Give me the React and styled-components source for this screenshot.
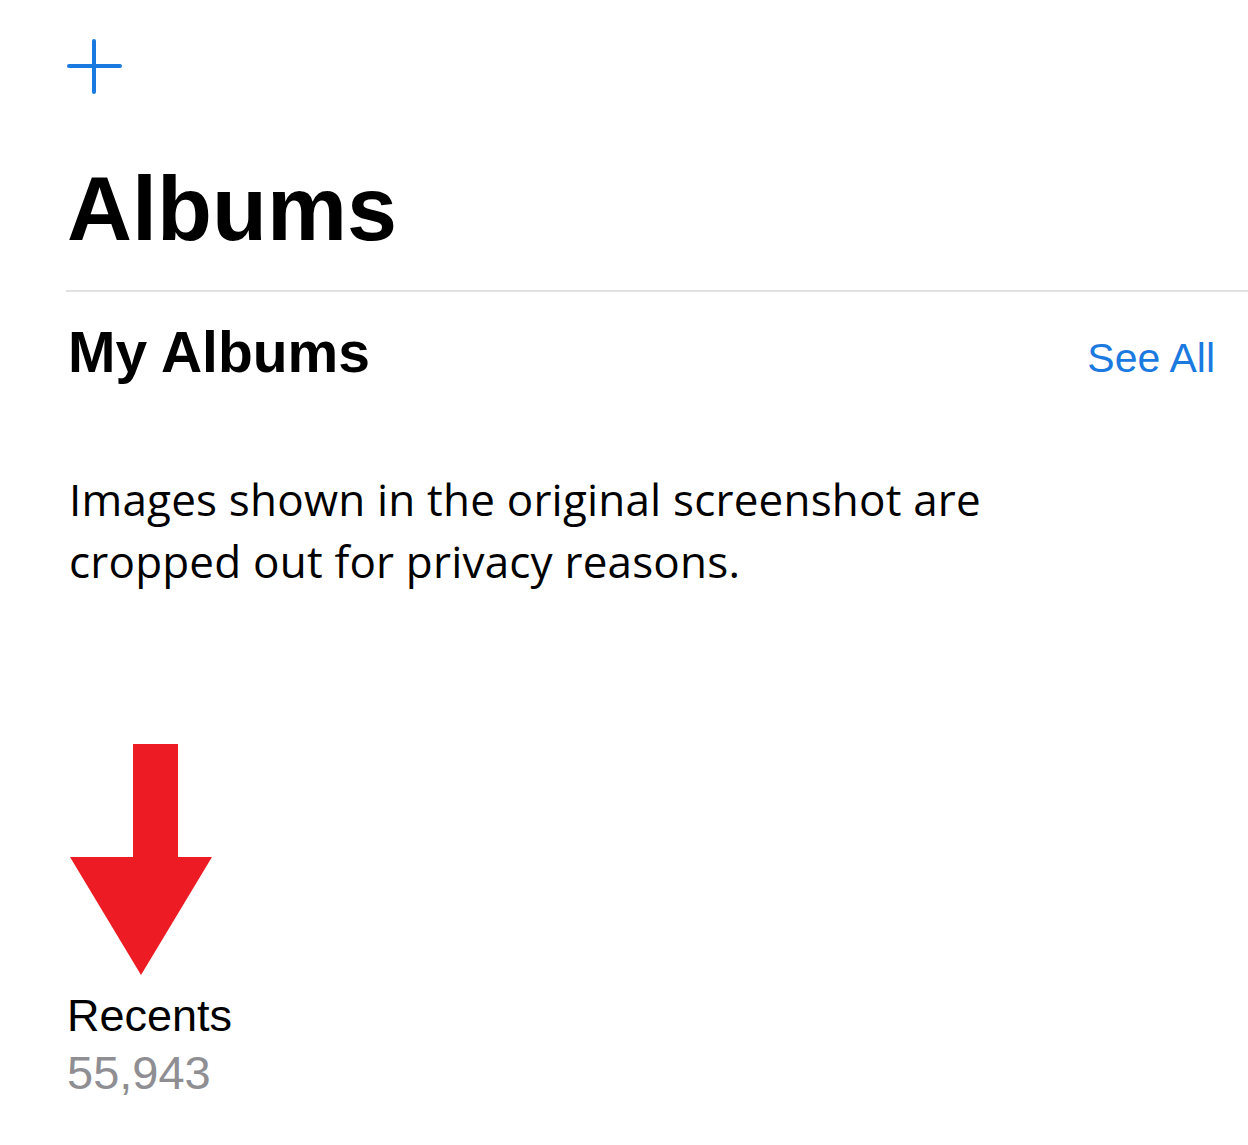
import React from "react";
import styled, { createGlobalStyle } from "styled-components";

const GlobalStyle = createGlobalStyle`
  html, body {
    margin: 0;
    padding: 0;
    background: #ffffff;
  }
  body {
    font-family: "Liberation Sans", Arial, sans-serif;
    color: #000;
  }
`;

const Page = styled.div`
  width: 1248px;
  height: 1145px;
  box-sizing: border-box;
  padding: 38px 0 0 66px;
  overflow: hidden;
`;

const AddButton = styled.button`
  display: block;
  width: 56px;
  height: 56px;
  padding: 0;
  border: 0;
  background: none;
  cursor: pointer;
`;

const Title = styled.h1`
  margin: 70px 0 0 1px;
  font-size: 90px;
  line-height: 1;
  font-weight: 700;
`;

const Divider = styled.hr`
  margin: 36px 0 0;
  border: 0;
  height: 2px;
  background: #e1e1e1;
`;

const SectionHead = styled.div`
  display: flex;
  align-items: baseline;
  justify-content: space-between;
  padding-right: 33px;
  margin-top: 32px;
`;

const SectionTitle = styled.h2`
  margin: 0 0 0 2px;
  font-size: 57px;
  line-height: 1;
  font-weight: 700;
`;

const SeeAll = styled.a`
  font-size: 41px;
  line-height: 1;
  color: #1b7ae0;
  text-decoration: none;
  cursor: pointer;
`;

const Notice = styled.p`
  margin: 87px 0 0 3px;
  font-family: "Open Sans", sans-serif;
  font-size: 44px;
  line-height: 62px;
  letter-spacing: 0.2px;
  color: #000;
`;

const Pointer = styled.svg`
  display: block;
  margin: 152px 0 0 4px;
`;

const AlbumName = styled.div`
  margin: 18px 0 0 1px;
  font-size: 45px;
  line-height: 1;
`;

const AlbumCount = styled.div`
  margin-top: 11px;
  margin-left: 1px;
  font-size: 47px;
  line-height: 1;
  color: #8e8e93;
`;

export default function App() {
  return (
    <>
      <GlobalStyle />
      <Page>
        <AddButton aria-label="Add album">
          <svg width="56" height="56" viewBox="0 0 56 56">
            <path
              d="M28 3v51M3 28h51"
              stroke="#1b7ae0"
              strokeWidth="4"
              strokeLinecap="round"
              fill="none"
            />
          </svg>
        </AddButton>
        <Title>Albums</Title>
        <Divider />
        <SectionHead>
          <SectionTitle>My Albums</SectionTitle>
          <SeeAll>See All</SeeAll>
        </SectionHead>
        <Notice>
          Images shown in the original screenshot are
          <br />
          cropped out for privacy reasons.
        </Notice>
        <Pointer width="142" height="231" viewBox="0 0 142 231">
          <polygon
            points="63,0 108,0 108,113 142,113 71,231 0,113 63,113"
            fill="#ed1c24"
          />
        </Pointer>
        <AlbumName>Recents</AlbumName>
        <AlbumCount>55,943</AlbumCount>
      </Page>
    </>
  );
}
